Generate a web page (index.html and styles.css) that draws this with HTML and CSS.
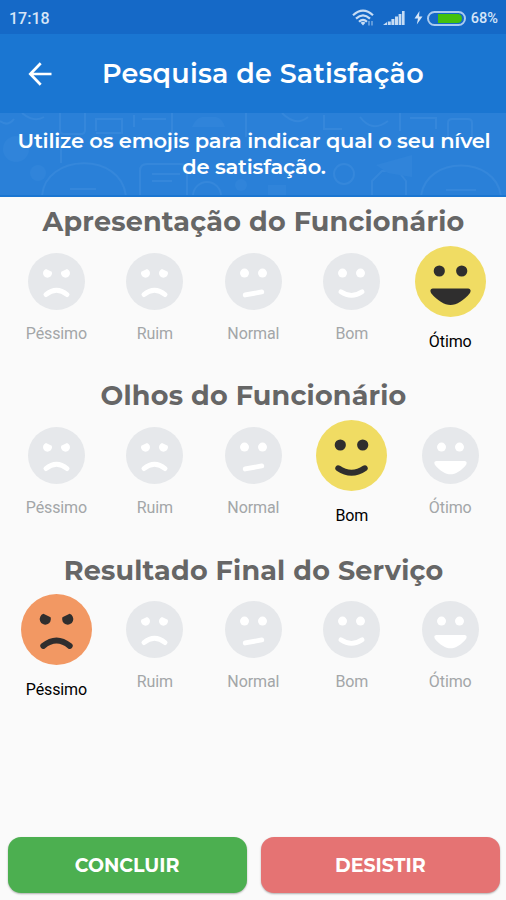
FILE: index.html
```html
<!DOCTYPE html>
<html lang="pt-BR">
<head>
    <meta charset="UTF-8">
    <meta name="viewport" content="width=device-width, initial-scale=1.0">
    <title>Pesquisa de Satisfação</title>
    <link rel="stylesheet" href="styles.css">
</head>
<body>
    <!-- faces, centered on 0,0 -->
    <svg class="sprites" width="0" height="0">
        <symbol id="pessimo" viewBox="-35.5 -35.5 71 71">
            <circle class="skin" r="35.5"/>
            <path class="ink" d="M-13.1-15.7L-5.9-12.3A5.6 5.6 0 1 1-13.1-15.7ZM13.1-15.7L5.9-12.3A5.6 5.6 0 1 0 13.1-15.7Z"/>
            <path class="line" d="M-13.2 16.3Q0 5.7 13.2 16.3"/>
        </symbol>
        <symbol id="ruim" viewBox="-35.5 -35.5 71 71">
            <circle class="skin" r="35.5"/>
            <path class="ink" d="M-16.5-12.3L-9.3-15.7A5.6 5.6 0 1 1-16.5-12.3ZM16.5-12.3L9.3-15.7A5.6 5.6 0 1 0 16.5-12.3Z"/>
            <path class="line" d="M-13.2 16.3Q0 5.7 13.2 16.3"/>
        </symbol>
        <symbol id="normal" viewBox="-35.5 -35.5 71 71">
            <circle class="skin" r="35.5"/>
            <circle class="ink" cx="-11.2" cy="-10.5" r="5.6"/>
            <circle class="ink" cx="11.2" cy="-10.5" r="5.6"/>
            <path class="line" d="M-10.3 16.8L10.3 13"/>
        </symbol>
        <symbol id="bom" viewBox="-35.5 -35.5 71 71">
            <circle class="skin" r="35.5"/>
            <circle class="ink" cx="-11.2" cy="-10.5" r="5.6"/>
            <circle class="ink" cx="11.2" cy="-10.5" r="5.6"/>
            <path class="line" d="M-13.2 12.8Q0 21.8 13.2 12.8"/>
        </symbol>
        <symbol id="otimo" viewBox="-35.5 -35.5 71 71">
            <circle class="skin" r="35.5"/>
            <circle class="ink" cx="-11.2" cy="-10.5" r="5.6"/>
            <circle class="ink" cx="11.2" cy="-10.5" r="5.6"/>
            <path class="ink" d="M-17.8 7H17.8Q21.3 7.5 19.5 11.5C13.5 19 6 23.5 0 23.5S-13.5 19-19.5 11.5Q-21.3 7.5-17.8 7Z"/>
        </symbol>
    </svg>

    <div class="status-bar">
        <span class="clock">17:18</span>
        <svg class="wifi" width="23" height="18" viewBox="0 0 23 18">
            <g fill="none" stroke="#c6dcf4" stroke-width="2.2">
                <path d="M1 6.2Q11 -3 21 6.2M4 9.6Q11 3 18 9.6M7 12.8Q11 9 15 12.8"/>
            </g>
            <path fill="#c6dcf4" d="M8.6 13.8Q11 11.8 13.4 13.8L11 16.6Z"/>
            <path stroke="#7faee2" stroke-width="1.4" d="M17 12V16.5M20 12V16.5"/>
        </svg>
        <svg class="signal" width="23" height="16" viewBox="0 0 23 16">
            <path fill="#c6dcf4" d="M0 15L4 12V15ZM4.8 11.5H7.8V15H4.8ZM8.4 9H11.4V15H8.4ZM12 6.5H15V15H12ZM15.6 4H18.4V15H15.6ZM19 1H21.6V15H19Z"/>
        </svg>
        <svg class="bolt" width="9" height="14" viewBox="0 0 9 14">
            <path fill="#d5e5f7" d="M5.5 0L0.5 7.5H4L2.8 13.5L8.5 5.5H5Z"/>
        </svg>
        <div class="battery"><div class="level"></div></div>
        <span class="percent">68%</span>
    </div>

    <div class="header">
        <svg class="back" width="24" height="24" viewBox="0 0 24 24">
            <path fill="none" stroke="#fff" stroke-width="2.7" d="M12.7 1.2L2.3 12L12.7 22.8M2 12H23.5"/>
        </svg>
        <h1>Pesquisa de Satisfação</h1>
    </div>

    <div class="banner">
        <svg class="pattern" width="506" height="84" viewBox="0 0 506 84">
            <g fill="none" stroke="#3587db" stroke-width="2">
                <path d="M0 8Q8 14 14 6M22 0Q34 10 44 4M60 0V17Q60 21 64 21H81Q85 21 85 17V0M96 18V6H122V20H96M134 2V14M142 6H166M172 0V22M42 84C44 40 122 38 126 84M70 76H96M140 84V58Q140 51 147 51H180Q187 51 187 58V84M152 61H180M152 68H172M61 26V50"/>
                <circle cx="207" cy="83" r="14"/>
                <path d="M246 0V24M282 0Q296 14 308 4M324 2V16H342M360 4Q372 20 388 8M400 0V18M410 5H436V16M448 24V10Q448 6 452 6H468Q472 6 472 10V28M421 84C425 42 497 42 501 84M446 77H476"/>
                <circle cx="344" cy="61" r="10"/>
                <path d="M372 82V68L382 58H398L406 68V82"/>
            </g>
            <g fill="#3084da">
                <circle cx="16" cy="36" r="13"/>
                <circle cx="38" cy="60" r="8"/>
                <circle cx="241" cy="72" r="6"/>
                <path d="M192 14Q196 5 202 4H216Q222 5 225 14ZM376 52L412 42V64L388 60ZM268 72H286V82H268Z"/>
            </g>
        </svg>
        <p>Utilize os emojis para indicar qual o seu nível<br>de satisfação.</p>
    </div>

    <div class="questions">
        <div class="question">
            <h2>Apresentação do Funcionário</h2>
            <div class="options">
                <div class="option"><svg><use href="#pessimo"/></svg><span>Péssimo</span></div>
                <div class="option"><svg><use href="#ruim"/></svg><span>Ruim</span></div>
                <div class="option"><svg><use href="#normal"/></svg><span>Normal</span></div>
                <div class="option"><svg><use href="#bom"/></svg><span>Bom</span></div>
                <div class="option selected yellow"><svg><use href="#otimo"/></svg><span>Ótimo</span></div>
            </div>
        </div>

        <div class="question">
            <h2>Olhos do Funcionário</h2>
            <div class="options">
                <div class="option"><svg><use href="#pessimo"/></svg><span>Péssimo</span></div>
                <div class="option"><svg><use href="#ruim"/></svg><span>Ruim</span></div>
                <div class="option"><svg><use href="#normal"/></svg><span>Normal</span></div>
                <div class="option selected yellow"><svg><use href="#bom"/></svg><span>Bom</span></div>
                <div class="option"><svg><use href="#otimo"/></svg><span>Ótimo</span></div>
            </div>
        </div>

        <div class="question">
            <h2>Resultado Final do Serviço</h2>
            <div class="options">
                <div class="option selected orange"><svg><use href="#pessimo"/></svg><span>Péssimo</span></div>
                <div class="option"><svg><use href="#ruim"/></svg><span>Ruim</span></div>
                <div class="option"><svg><use href="#normal"/></svg><span>Normal</span></div>
                <div class="option"><svg><use href="#bom"/></svg><span>Bom</span></div>
                <div class="option"><svg><use href="#otimo"/></svg><span>Ótimo</span></div>
            </div>
        </div>
    </div>

    <div class="actions">
        <button class="button done">CONCLUIR</button>
        <button class="button quit">DESISTIR</button>
    </div>
</body>
</html>
```

FILE: styles.css
```css
* {
    box-sizing: border-box;
}

body {
    margin: 0;
    height: 900px;
    display: flex;
    flex-direction: column;
    background: #fafafa;
    font-family: Montserrat, Inter, sans-serif;
    overflow: hidden;
}

.sprites {
    display: none;
}

.status-bar {
    height: 34px;
    flex: none;
    display: flex;
    align-items: center;
    padding: 2px 8px 0 9px;
    background: #1569c7;
    color: #d5e5f7;
    font-family: Roboto, sans-serif;
    font-weight: 500;
    font-size: 16px;
}

.clock {
    margin-right: auto;
}

.wifi {
    margin-right: 8px;
}

.signal {
    margin-right: 8px;
}

.bolt {
    margin-right: 4px;
}

.battery {
    width: 39px;
    height: 15px;
    margin-right: 5px;
    padding: 1px 2px;
    border: 2px solid #a9caef;
    border-radius: 8px;
}

.level {
    width: 24px;
    height: 9px;
    margin-left: auto;
    background: #43c10d;
    border-radius: 0 5px 5px 0;
}

.percent {
    font-size: 14.5px;
}

.header {
    height: 79px;
    flex: none;
    display: flex;
    align-items: center;
    padding-left: 28px;
    background: #1a76d2;
    color: white;
}

h1 {
    margin: 0 0 0 50px;
    font-size: 27px;
    font-weight: 600;
    letter-spacing: 0.2px;
    white-space: nowrap;
}

.banner {
    position: relative;
    height: 84px;
    flex: none;
    background: #2a80d8;
    border-bottom: 2px solid #1a76d2;
    color: white;
    overflow: hidden;
}

.pattern {
    position: absolute;
    top: 0;
    left: 0;
}

.banner p {
    position: relative;
    margin: 15px 0 0 2px;
    text-align: center;
    font-size: 21px;
    font-weight: 600;
    line-height: 26px;
    letter-spacing: -0.22px;
    white-space: nowrap;
}

.questions {
    flex: 1;
}

.question {
    height: 174.4px;
}

h2 {
    height: 48.5px;
    margin: 0;
    padding-left: 1px;
    text-align: center;
    color: #666;
    font-size: 27px;
    font-weight: 700;
    line-height: 50px;
    letter-spacing: 0.2px;
    white-space: nowrap;
}

.options {
    display: grid;
    grid-template-columns: repeat(5, 1fr);
    padding: 0 6.5px 0 7.2px;
}

.option {
    display: flex;
    flex-direction: column;
    align-items: center;
    padding-top: 7px;
    color: #a3a6a8;
    font-family: Roboto, sans-serif;
    font-size: 16px;
    letter-spacing: -0.1px;
}

.option svg {
    width: 57px;
    height: 57px;
    fill: #e6e8eb;
    color: white;
}

.option span {
    margin-top: 14px;
    line-height: 20px;
}

.ink {
    fill: currentColor;
}

.line {
    fill: none;
    stroke: currentColor;
    stroke-width: 6;
    stroke-linecap: round;
}

.selected {
    padding-top: 0;
    color: black;
}

.selected svg {
    width: 71px;
    height: 71px;
    color: #2f2e2e;
}

.selected span {
    margin-top: 15px;
}

.yellow svg {
    fill: #f0dc63;
}

.orange svg {
    fill: #f29863;
}

.actions {
    display: grid;
    grid-template-columns: 1fr 1fr;
    gap: 14px;
    padding: 0 6px 7px 7.5px;
}

.button {
    height: 56px;
    border: none;
    border-radius: 13px;
    color: white;
    font-family: inherit;
    font-size: 19px;
    font-weight: 700;
    box-shadow: 0 1px 2px rgba(0, 0, 0, 0.3);
}

.done {
    background: #4caf50;
}

.quit {
    background: #e57373;
}
```
